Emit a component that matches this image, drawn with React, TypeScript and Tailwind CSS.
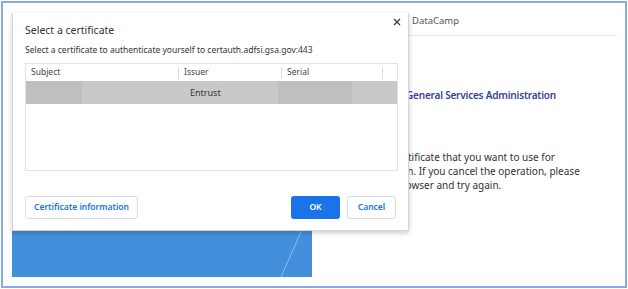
export default function App() {
  return (
    <div className="w-[628px] h-[289px] bg-white p-[1px] font-['Noto_Sans',sans-serif] text-[#333]">
      <div className="relative flex w-[626px] h-[287px] overflow-hidden border-2 border-[#86abec]">
        {/* left image panel of the page behind */}
        <div className="relative ml-[9px] mt-[10px] w-[300px] h-[264px] shrink-0 bg-[#448fdb]">
          <svg className="absolute inset-0" width="300" height="264">
            <line x1="380" y1="14" x2="269" y2="264" stroke="#8cbcef" strokeWidth="1" />
          </svg>
        </div>

        {/* right column of the page behind */}
        <div className="flex flex-1 flex-col">
          <div className="mr-[8px] flex h-[33px] items-center border-b border-[#e4e4e4] pl-[100px] pt-[5px] text-[9.5px] text-[#555]">
            DataCamp
          </div>
          <div className="mt-[52px] pl-[94px] text-[10px] font-semibold leading-[14px] tracking-[-0.2px] text-[#343f9c]">
            General Services Administration
          </div>
          <p className="mt-[48px] pl-[33px] text-[10px] leading-[14px] text-[#333]">
            Select the certificate that you want to use for
            <br />
            authentication. If you cancel the operation, please
            <br />
            close your browser and try again.
          </p>
        </div>

        {/* certificate dialog */}
        <div className="absolute left-[9px] top-[10px] flex w-[397px] h-[218px] flex-col border-x border-b border-[#d4d4d4] bg-white px-[12px] shadow-[0_2px_5px_rgba(0,0,0,0.2)]">
          <button className="absolute left-[379px] top-[4px] flex h-[9px] w-[9px] items-center justify-center">
            <svg width="8" height="8" viewBox="0 0 8 8">
              <path d="M1 1L7 7M7 1L1 7" stroke="#3c3c3c" strokeWidth="1.3" />
            </svg>
          </button>
          <h1 className="pt-[9px] text-[10.5px] leading-[16px] text-[#333]">Select a certificate</h1>
          <p className="mt-[6px] text-[8.5px] leading-[12px] text-[#333]">
            Select a certificate to authenticate yourself to certauth.adfsi.gsa.gov:443
          </p>

          <div className="mt-[7px] h-[108px] w-[373px] border border-[#e3e3e3] text-[9px]">
            <div className="flex h-[17px] items-center text-[8.5px] text-[#444]">
              <div className="flex w-[153px] items-center justify-between pl-[5px]">
                <span>Subject</span>
                <span className="h-[12px] w-px bg-[#d9d9d9]" />
              </div>
              <div className="flex w-[103px] items-center justify-between pl-[5px]">
                <span>Issuer</span>
                <span className="h-[12px] w-px bg-[#d9d9d9]" />
              </div>
              <div className="flex w-[101px] items-center justify-between pl-[5px]">
                <span>Serial</span>
                <span className="h-[12px] w-px bg-[#d9d9d9]" />
              </div>
            </div>
            <div className="flex h-[23px] items-stretch bg-[#c9c9c9]">
              <div className="w-[56px] bg-[#bfbfbf]" />
              <div className="w-[108px]" />
              <div className="flex w-[88px] items-center">Entrust</div>
              <div className="w-[74px] bg-[#bfbfbf]" />
            </div>
          </div>

          <div className="mt-[25px] flex h-[23px] items-stretch text-[8.5px] font-semibold">
            <button className="w-[113px] rounded-[3px] border border-[#dadce0] text-[#1a73e8]">
              Certificate information
            </button>
            <div className="flex-1" />
            <button className="w-[49px] rounded-[3px] bg-[#1a73e8] text-white">OK</button>
            <button className="ml-[7px] w-[49px] rounded-[3px] border border-[#dadce0] text-[#1a73e8]">
              Cancel
            </button>
          </div>
        </div>
      </div>
    </div>
  );
}
